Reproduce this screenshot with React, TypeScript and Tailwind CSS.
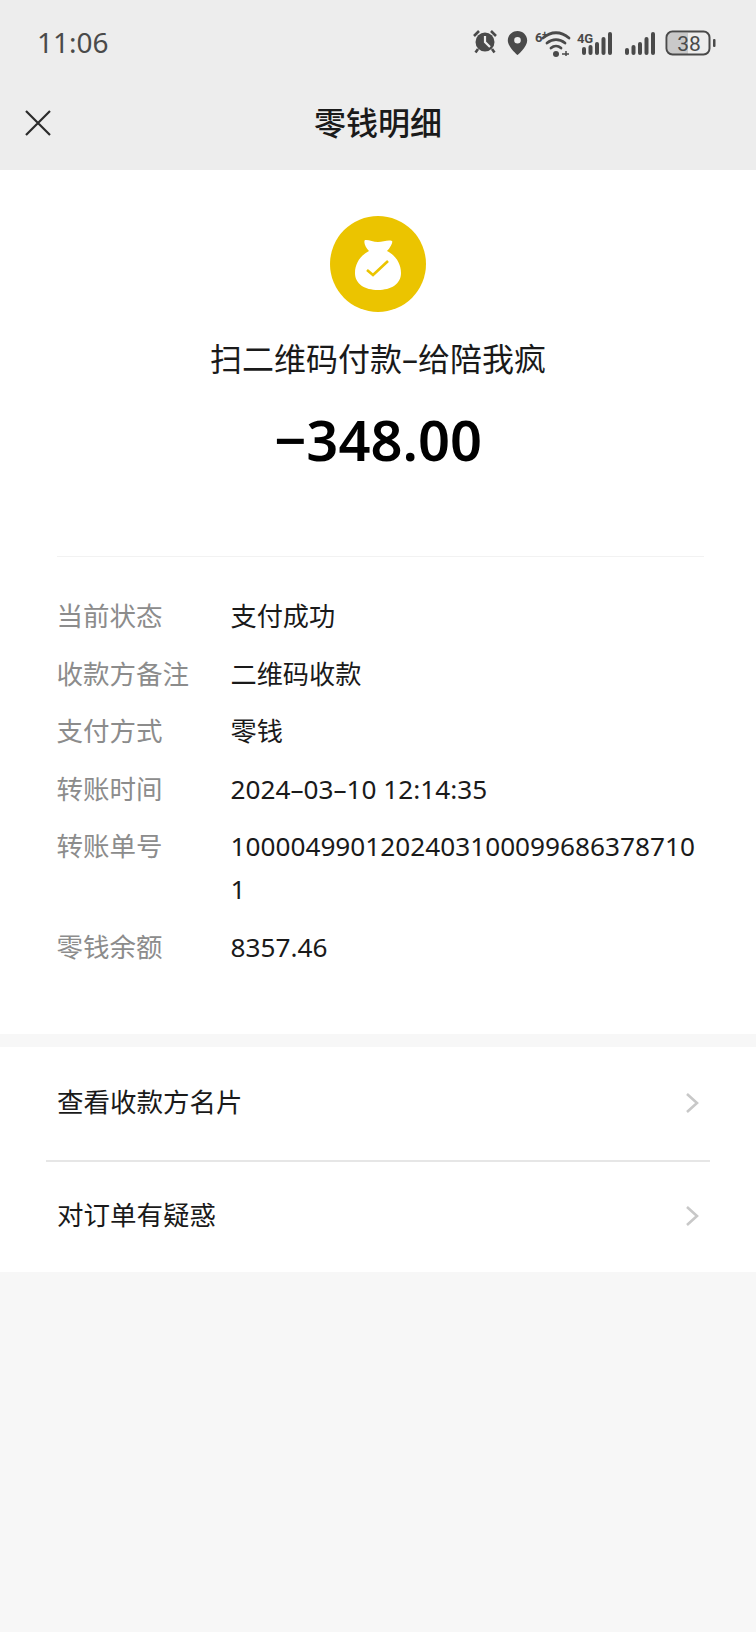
const details = [
  { label: "当前状态", value: "支付成功" },
  { label: "收款方备注", value: "二维码收款" },
  { label: "支付方式", value: "零钱" },
  { label: "转账时间", value: "2024–03–10 12:14:35" },
  { label: "转账单号", value: "10000499012024031000996863787101" },
  { label: "零钱余额", value: "8357.46" },
];

function StatusIcons() {
  return (
    <svg width="244" height="30" viewBox="0 0 244 30" className="mt-[2px] text-[#4a4a4a]" fill="currentColor">
      {/* alarm */}
      <circle cx="13" cy="14" r="9.500" />
      <path d="M13 8v6l5 5" fill="none" stroke="#ededed" strokeWidth="2.200" />
      <path d="M2 8l5-5M24 8l-5-5" fill="none" stroke="currentColor" strokeWidth="2.600" />
      <path d="M6 21l-2.500 3.500M20 21l2.500 3.500" fill="none" stroke="currentColor" strokeWidth="2.600" />
      {/* location */}
      <path d="M45.500 3c-5.400 0-9.700 4.200-9.700 9.500 0 6.600 9.700 14.500 9.700 14.500s9.700-7.900 9.700-14.500C55.200 7.200 50.900 3 45.500 3zm0 12.600a3.300 3.300 0 1 1 0-6.600 3.300 3.300 0 0 1 0 6.600z" />
      {/* wifi */}
      <text x="63" y="14" fontSize="13" fontWeight="700" fontFamily="Roboto, sans-serif">6</text>
      <text x="70" y="10" fontSize="10" fontWeight="700" fontFamily="Roboto, sans-serif">+</text>
      <path d="M71 10c8-7 18-7 26 0M75 15c5.500-4.500 12.500-4.500 18 0M79 20c3-2.500 7-2.500 10 0" fill="none" stroke="currentColor" strokeWidth="2.800" strokeLinecap="round" />
      <circle cx="84" cy="26" r="3" />
      <path d="M90 26h7M94 23v5" stroke="currentColor" strokeWidth="1.500" />
      {/* 4g signal */}
      <text x="105" y="15" fontSize="13" fontWeight="700" fontFamily="Roboto, sans-serif" textLength="16">4G</text>
      <rect x="110" y="19" width="4" height="8" rx="2" />
      <rect x="116.500" y="17" width="4" height="10" rx="2" />
      <rect x="123" y="14" width="4" height="13" rx="2" />
      <rect x="129.500" y="9" width="4" height="18" rx="2" />
      <rect x="136" y="4" width="4" height="23" rx="2" />
      {/* signal */}
      <rect x="153" y="20" width="4" height="7" rx="2" />
      <rect x="159.500" y="17" width="4" height="10" rx="2" />
      <rect x="166" y="14" width="4" height="13" rx="2" />
      <rect x="172.500" y="9" width="4" height="18" rx="2" />
      <rect x="179" y="4" width="4" height="23" rx="2" />
      {/* battery */}
      <path d="M199 5h17v21h-17a3 3 0 0 1-3-3V8a3 3 0 0 1 3-3z" fill="#c9c9c9" />
      <rect x="194.500" y="3.500" width="43" height="23" rx="6" fill="none" stroke="currentColor" strokeWidth="2" />
      <rect x="241" y="11" width="2.500" height="8" rx="1" />
      <text x="217" y="22.500" textAnchor="middle" fontSize="21" fontFamily="Roboto, sans-serif">38</text>
    </svg>
  );
}

function MoneyBag() {
  return (
    <div className="flex h-24 w-24 items-center justify-center rounded-full bg-[#ebc400]">
      <svg width="46" height="52" viewBox="0 0 46 52" fill="#fff">
        <path d="M10 2c4-.5 8 2 13 2 5 0 10-2.500 14-1 1 .5-1 6-5 10 8 4 14 12 14 22 0 11-10 17-23 17S0 46 0 35c0-10 6-18 14-22-3-3-6-9-4-11z" />
        <path d="M12 32l6 5 15-14" fill="none" stroke="#ebc400" strokeWidth="2.600" />
      </svg>
    </div>
  );
}

function Chevron() {
  return (
    <svg width="14" height="22" viewBox="0 0 14 22" fill="none" stroke="#c8c8c8" strokeWidth="2.600">
      <path d="M2 2l10 9-10 9" />
    </svg>
  );
}

export default function App() {
  return (
    <div className="flex min-h-[1632px] w-[756px] flex-col bg-[#f7f7f7] font-['Noto_Sans','Noto_Sans_CJK_SC',sans-serif]">
      <div className="bg-[#ededed]">
        <div className="flex h-[84px] items-center justify-between pr-[40px] pl-[37px]">
          <span className="text-[28px] text-[#4a4a4a]">11:06</span>
          <StatusIcons />
        </div>
        <div className="relative flex h-[86px] items-center justify-center pb-2">
          <svg className="absolute left-6 top-[25px]" width="28" height="28" viewBox="0 0 28 28" fill="none" stroke="#2b2b2b" strokeWidth="2.200">
            <path d="M2 2l24 24M26 2L2 26" />
          </svg>
          <span className="text-[32px] font-medium text-[#1a1a1a]">零钱明细</span>
        </div>
      </div>

      <div className="flex h-[864px] flex-col items-center bg-white pt-[46px]">
        <MoneyBag />
        <p className="mt-[25px] text-[32px] leading-[44px] text-[#1a1a1a]">扫二维码付款–给陪我疯</p>
        <p className="mt-[20px] text-[56px] leading-[76px] font-semibold text-black">−348.00</p>

        <div className="mt-[79px] ml-[4px] w-[647px] border-t border-[#f2f2f2] pt-[38px]">
          <div className="flex flex-col gap-[14.5px]">
            {details.map((d) => (
              <div key={d.label} className="flex leading-[43px]">
                <span className="w-[174px] shrink-0 text-[26.500px] text-[#8c8c8c]">{d.label}</span>
                <span className="min-w-0 flex-1 text-[26.200px] break-all text-[#1a1a1a]">{d.value}</span>
              </div>
            ))}
          </div>
        </div>
      </div>

      <div className="mt-[13px] bg-white">
        <div className="flex h-[113px] items-center justify-between px-[57px] pb-[2px] text-[26.500px] text-[#1a1a1a]">
          <span>查看收款方名片</span>
          <Chevron />
        </div>
        <div className="mx-[46px] h-[2px] bg-[#e6e6e6]" />
        <div className="flex h-[110px] items-center justify-between px-[57px] pb-[2px] text-[26.500px] text-[#1a1a1a]">
          <span>对订单有疑惑</span>
          <Chevron />
        </div>
      </div>
    </div>
  );
}
